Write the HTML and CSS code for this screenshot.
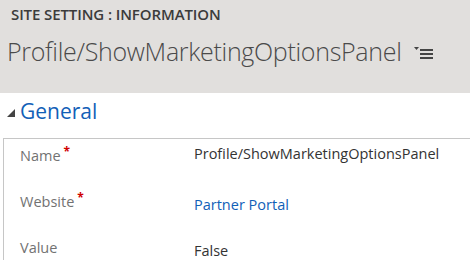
FILE: index.html
```html
<!DOCTYPE html>
<html lang="en">
<head>
    <meta charset="UTF-8">
    <title>Site Setting : Information</title>
    <link rel="stylesheet" href="styles.css">
</head>
<body>
    <div class="header">
        <div class="entity">SITE SETTING : INFORMATION</div>
        <div class="title-row">
            <h1 class="title">Profile/ShowMarketingOptionsPanel</h1>
            <svg class="menu-icon" width="20" height="12" viewBox="0 0 20 12">
                <polygon points="0,0 5,0 2.5,3" fill="#444"/>
                <rect x="6" y="2" width="13" height="2" fill="#444"/>
                <rect x="6" y="6" width="13" height="2" fill="#444"/>
                <rect x="6" y="10" width="13" height="2" fill="#444"/>
            </svg>
        </div>
    </div>

    <div class="section">
        <div class="section-head">
            <svg class="collapse" width="8" height="8" viewBox="0 0 8 8">
                <polygon points="8,0 8,8 0,8" fill="#444"/>
            </svg>
            <h2>General</h2>
        </div>

        <div class="fields">
            <div class="field">
                <div class="label">Name<span class="req">*</span></div>
                <div class="value top">Profile/ShowMarketingOptionsPanel</div>
            </div>
            <div class="field">
                <div class="label">Website<span class="req">*</span></div>
                <div class="value link">Partner Portal</div>
            </div>
            <div class="field">
                <div class="label">Value</div>
                <div class="value">False</div>
            </div>
        </div>
    </div>
</body>
</html>
```

FILE: styles.css
```css
/* Page */
body {
    margin: 0;
    font-family: "Open Sans", "Noto Sans", sans-serif;
    background: #ffffff;
    color: #444;
}

/* Header band */
.header {
    background: #e1dfdd;
    height: 93px;
    padding: 4px 0 0 7px;
    box-sizing: border-box;
}

.entity {
    font-size: 15px;
    font-weight: 600;
    color: #3b3b3b;
    padding-left: 4px;
    line-height: 20px;
    letter-spacing: -0.1px;
}

.title-row {
    display: flex;
    align-items: center;
    margin-top: 10px;
}

.title {
    margin: 0;
    font-size: 25px;
    font-weight: 300;
    color: #4a4a4a;
    line-height: 34px;
    letter-spacing: -0.3px;
}

.menu-icon {
    margin-left: 12px;
    margin-top: 4px;
}

/* General section */
.section {
    padding: 3px 0 0 3px;
}

.section-head {
    display: flex;
    align-items: center;
    padding-left: 4px;
}

.collapse {
    margin-right: 5px;
    margin-top: 3px;
}

h2 {
    margin: 0;
    font-size: 21px;
    font-weight: 400;
    color: #1160b7;
    line-height: 30px;
}

.fields {
    margin-top: 12px;
    border-left: 1px solid #c6c6c6;
    border-top: 1px solid #c6c6c6;
}

.field {
    display: grid;
    grid-template-columns: 190px 1fr;
    min-height: 46px;
    line-height: 18px;
}

.field:last-child {
    min-height: 0;
}

.label {
    padding: 8px 0 0 16px;
    font-size: 14.5px;
    color: #727272;
}

.req {
    color: #d00000;
    font-weight: 700;
    margin-left: 3px;
    font-size: 12px;
    position: relative;
    top: -5px;
}

.value {
    padding-top: 11px;
    font-size: 14.5px;
    color: #333;
}

.value.top {
    padding-top: 6px;
}

.link {
    color: #1160b7;
}
```
